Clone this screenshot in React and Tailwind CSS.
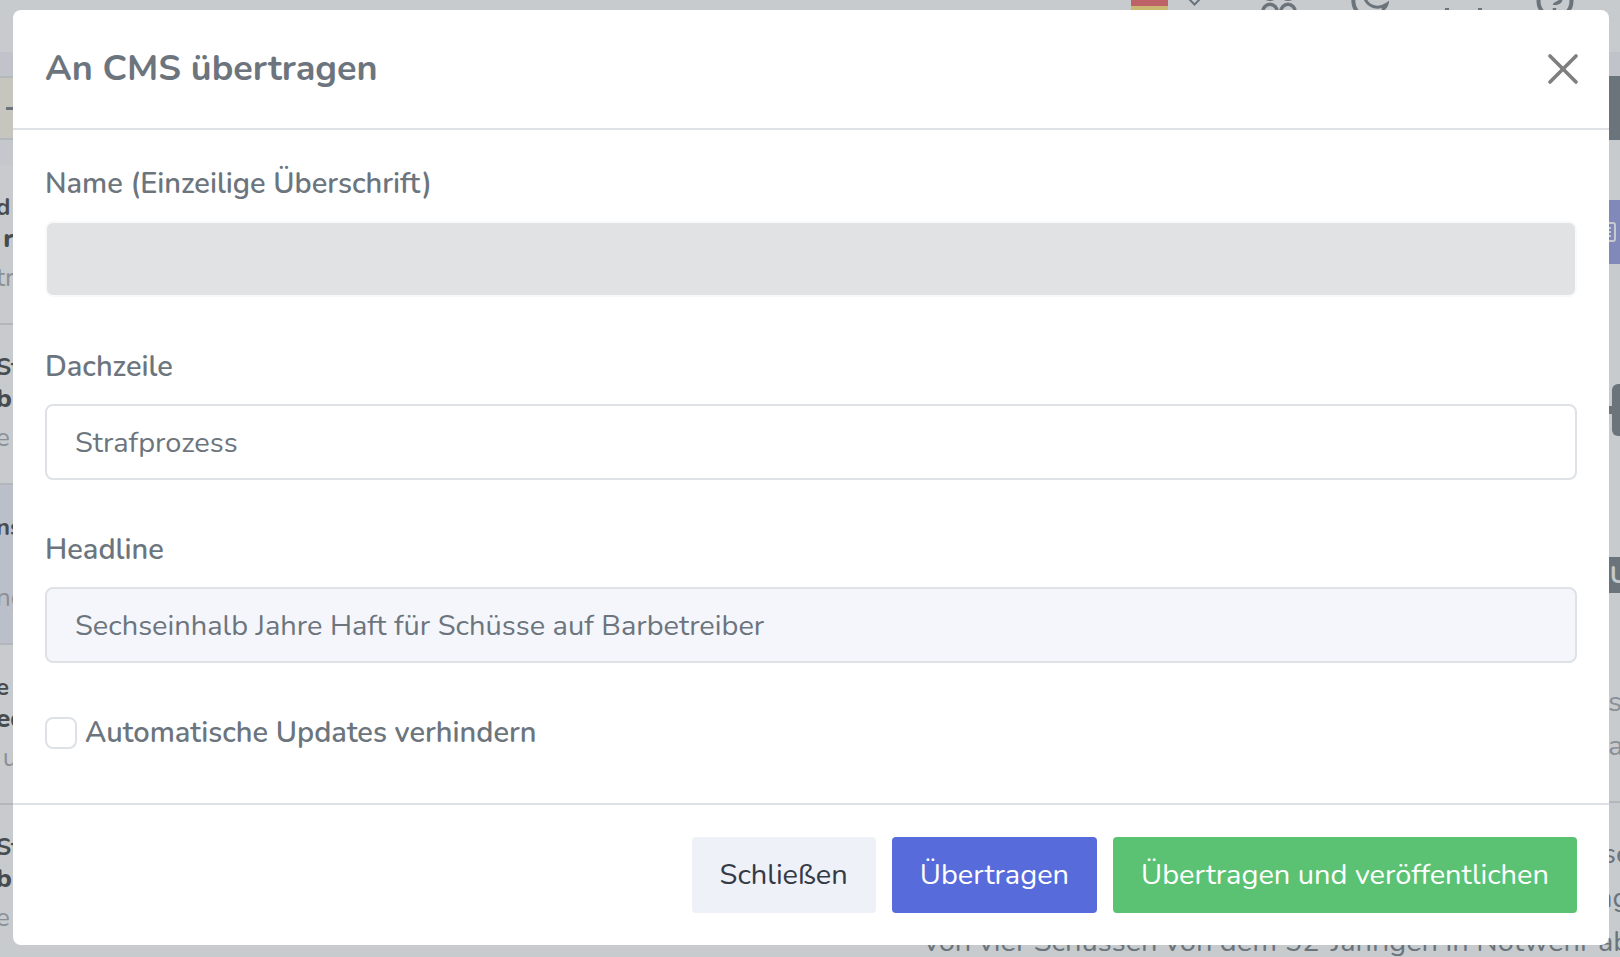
import { useState } from "react";
import { X } from "lucide-react";

const articles = [
  { id: 1, kicker: "d", title: "\u00a0r", meta: "tr" },
  { id: 2, kicker: "St", title: "b", meta: "e" },
  { id: 3, kicker: "ns", title: "", meta: "ng", active: true },
  { id: 4, kicker: "e", title: "ed", meta: "\u00a0u" },
  { id: 5, kicker: "St", title: "b", meta: "e" },
];

function TopBar() {
  return (
    <header className="flex h-[52px] items-start justify-end pr-[46px] text-[#6b747b]">
      <svg width="37" height="10" viewBox="0 0 37 10" className="mr-5">
        <path d="M0 0h37v6H0z" fill="#bd6267" />
        <path d="M0 6h37v4H0z" fill="#c8b872" />
      </svg>
      <svg width="13" height="10" viewBox="0 0 13 10" fill="none" stroke="currentColor" strokeWidth="2" className="mr-[60px]">
        <path d="M1 -1l5.500 5.500L12 -1" />
      </svg>
      <svg width="36" height="12" viewBox="0 0 36 12" fill="none" stroke="currentColor" strokeWidth="3.500" className="mr-[54px]">
        <circle cx="9" cy="11.500" r="7.200" />
        <circle cx="27" cy="11.500" r="7.200" />
        <path d="M5 -1q4 2 8 0M23 -1q4 2 8 0" strokeWidth="2" />
      </svg>
      <svg width="38" height="14" viewBox="0 0 38 14" fill="none" stroke="currentColor" strokeWidth="4" className="mr-14">
        <path d="M2.500 -2q-1 8 4 14" />
        <path d="M14 -1c4 8 13 11 22 5q-1 4-5 6" strokeWidth="3" />
      </svg>
      <svg width="38" height="12" viewBox="0 0 38 12" fill="currentColor" className="mr-[53px]">
        <path d="M0 8h4v4H0zM33 8h4v4h-4z" />
      </svg>
      <svg width="38" height="18" viewBox="0 0 38 18" fill="none" stroke="currentColor" strokeWidth="4">
        <circle cx="19" cy="1" r="16.500" />
        <path d="M25 -2q0 4-4 5q-2.500 1-2.500 2M18.500 8v4" strokeWidth="3.500" />
      </svg>
    </header>
  );
}

function ArticleList() {
  return (
    <div className="-ml-1 flex w-6 flex-col">
      <div className="flex h-16 items-center justify-end border-y-2 border-[#b3b8be] bg-[#c6c5be]">
        <span className="h-[3px] w-[14px] bg-[#6b747b]" />
      </div>
      <div className="h-[25px] bg-[#c4c7cb]" />
      {articles.map((a) => (
        <div
          key={a.id}
          className={`flex h-40 shrink-0 flex-col items-start border-b-2 border-[#b3b6ba] pt-[26px] ${a.active ? "bg-[#bbbfca]" : ""}`}
        >
          <span className="h-[30px] text-2xl leading-8 font-bold text-[#484b4e]">{a.kicker}</span>
          <span className="h-[37px] text-[26px] leading-9 font-extrabold text-[#484b4e]">{a.title}</span>
          <span className="h-10 text-[26px] leading-10 text-[#8b9096]">{a.meta}</span>
        </div>
      ))}
    </div>
  );
}

function ArticlePreview() {
  return (
    <div className="flex w-[696px] flex-col items-end text-[29px] text-[#6b747b]">
      <div className="h-16 w-5 bg-[#6b747b]" />
      <div className="mt-[60px] flex h-16 w-[14px] items-center bg-[#8189bb]">
        <svg width="10" height="20" viewBox="0 0 10 20" fill="none" stroke="#c6c9cd" strokeWidth="2">
          <path d="M-4 1h11q2 0 2 2v14q0 2-2 2H-4M0 6h5M0 10h5M0 14h5" />
        </svg>
      </div>
      <div className="mt-[120px] flex h-[52px] items-center">
        <span className="h-2 w-1 bg-[#6b747b]" />
        <span className="h-[52px] w-2 rounded-l-md bg-[#6b747b]" />
      </div>
      <div className="mt-[121px] flex h-9 w-[14px] items-center bg-[#6b747b] pl-1 text-2xl font-bold text-[#c6c9cd]">
        U
      </div>
      <div className="mt-[87px] h-11 w-3 leading-[44px] text-[#8b9096]">s</div>
      <div className="h-11 w-3 leading-[44px] text-[#8b9096]">a</div>
      <div className="mt-[33px] w-full border-t-2 border-[#b3b6ba]" />
      <div className="mt-[29px] h-11 w-[18px] leading-[44px]">se</div>
      <div className="h-11 w-6 leading-[44px]">ng</div>
      <div className="h-11 self-start leading-[44px] whitespace-nowrap">
        von vier Schüssen von dem 52-Jährigen in Notwehr ab
      </div>
    </div>
  );
}

function Field({ id, label, className, ...props }) {
  return (
    <div className="mb-12">
      <label htmlFor={id} className="mb-4 block text-[29px] leading-[43px] font-semibold">
        {label}
      </label>
      <input
        id={id}
        type="text"
        className={`block h-[76px] w-full rounded-lg border-2 px-7 text-[29px] outline-none ${className}`}
        {...props}
      />
    </div>
  );
}

export default function App() {
  const [kicker, setKicker] = useState("Strafprozess");
  const [headline, setHeadline] = useState("Sechseinhalb Jahre Haft für Schüsse auf Barbetreiber");
  const [blockUpdates, setBlockUpdates] = useState(false);

  return (
    <div className="relative h-screen overflow-hidden bg-[#c7cbce] font-['Nunito','Lato',sans-serif]">
      <div aria-hidden="true" className="h-full overflow-hidden">
        <TopBar />
        <div className="h-6 bg-[#c0c3ca]" />
        <div className="flex justify-between">
          <ArticleList />
          <ArticlePreview />
        </div>
      </div>

      <div className="absolute inset-0 pt-[10px] pr-[11px] pl-[13px]">
        <div role="dialog" aria-modal="true" aria-labelledby="dialog-title" className="rounded-lg bg-white text-[#6c757d]">
          <div className="flex h-[120px] items-center justify-between border-b-2 border-[#dee2e6] px-8">
            <h1 id="dialog-title" className="text-4xl font-bold">
              An CMS übertragen
            </h1>
            <button type="button" aria-label="Dialog schließen" className="-mr-3 text-[#7f7f7f]">
              <X size={52} strokeWidth={1.7} />
            </button>
          </div>

          <div className="px-8 pt-8">
            <Field id="name" label="Name (Einzeilige Überschrift)" disabled className="border-[#f8f9fa] bg-[#e1e2e4]" />
            <Field
              id="kicker"
              label="Dachzeile"
              value={kicker}
              onChange={(e) => setKicker(e.target.value)}
              className="border-[#dee2e6] bg-white"
            />
            <Field
              id="headline"
              label="Headline"
              value={headline}
              onChange={(e) => setHeadline(e.target.value)}
              className="border-[#dee2e6] bg-[#f5f6fb]"
            />
            <label className="flex h-11 items-center gap-2 text-[29px] font-semibold">
              <input
                type="checkbox"
                checked={blockUpdates}
                onChange={(e) => setBlockUpdates(e.target.checked)}
                className="size-8 appearance-none rounded-lg border-2 border-[#dee2e6] bg-white checked:bg-[#586bdb]"
              />
              Automatische Updates verhindern
            </label>
          </div>

          <div className="mt-12 flex justify-end gap-4 border-t-2 border-[#dee2e6] p-8 text-[29px]">
            <button type="button" className="h-[76px] rounded bg-[#eef1f7] px-7 text-[#343a46]">
              Schließen
            </button>
            <button type="button" className="h-[76px] rounded bg-[#586bdb] px-7 text-white">
              Übertragen
            </button>
            <button type="button" className="h-[76px] rounded bg-[#5bc273] px-7 text-white">
              Übertragen und veröffentlichen
            </button>
          </div>
        </div>
      </div>
    </div>
  );
}
